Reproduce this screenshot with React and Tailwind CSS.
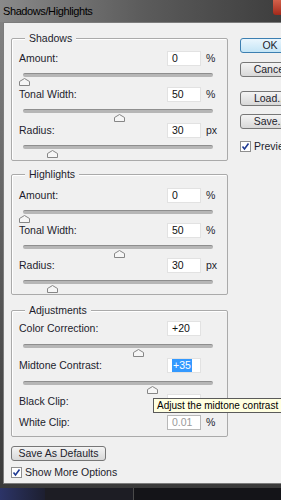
import React from "react";

const font = "font-['Liberation_Sans',Arial,sans-serif]";

function Thumb({ x }) {
    return (
        <svg
            className="absolute top-[5px]"
            style={{ left: x - 5 }}
            width="11"
            height="8"
            viewBox="0 0 11 8"
        >
            <path d="M0.5 7.5 V3.5 L5.5 0.5 L10.5 3.5 V7.5 Z" fill="#f6f6f6" stroke="#868686" />
        </svg>
    );
}

function Slider({ x, h = "h-[21px]", top = "top-[7px]" }) {
    return (
        <div className={`relative ml-[11px] w-[190px] ${h}`}>
            <div className={`absolute left-0 right-0 ${top} h-[4px] rounded-full bg-[#b6b6b6] border-t border-[#8e8e8e]`} />
            <div className={`absolute left-0 right-0 ${top} h-[4px]`}>
                <Thumb x={x} />
            </div>
        </div>
    );
}

function Field({ label, value, unit, selected, disabled }) {
    return (
        <div className="flex items-center h-[15px] pl-[7px]">
            <span className="flex-1 text-[10.5px] text-[#1d1d2d] leading-none">{label}</span>
            <div
                className={`w-[34px] h-[15px] bg-white border ${disabled ? "border-[#b8b8b8] text-[#9a9a9a]" : "border-[#e2e2e2] text-[#111]"} text-[10.5px] leading-none flex items-center pl-[4px]`}
            >
                {selected ? (
                    <span className="bg-[#3399ff] text-white px-[1px] py-[1px]">{value}</span>
                ) : (
                    value
                )}
            </div>
            <span className="w-[26px] pl-[5px] text-[10.5px] text-[#1d1d2d] leading-none">{unit}</span>
        </div>
    );
}

function Group({ title, className, children }) {
    return (
        <div className={`relative w-[217px] border border-[#aaaaaa] rounded-[2px] shadow-[inset_1px_1px_0_#ffffff] ${className}`}>
            <span className="absolute -top-[7px] left-[13px] px-[4px] bg-[#f0f0f0] text-[10.5px] leading-[12px] text-[#1d1d2d]">
                {title}
            </span>
            {children}
        </div>
    );
}

function Button({ children, primary, className }) {
    return (
        <div
            className={`h-[15px] rounded-[3px] border flex items-center justify-center text-[10.5px] leading-none text-[#1d1d2d] ${primary
                ? "border-[#3c7fb1] bg-gradient-to-b from-[#eaf6fd] to-[#c4e5f6]"
                : "border-[#777777] bg-gradient-to-b from-[#f4f4f4] to-[#d8d8d8]"
                } ${className}`}
        >
            {children}
        </div>
    );
}

function Checkbox({ label, className }) {
    return (
        <div className={`flex items-center gap-[3px] ${className}`}>
            <div className="w-[11px] h-[11px] bg-white border border-[#8f8f8f] flex items-center justify-center">
                <svg width="9" height="9" viewBox="0 0 9 9">
                    <path d="M1.5 4.5 L3.5 7 L7.5 1.5" fill="none" stroke="#1f3a93" strokeWidth="1.6" />
                </svg>
            </div>
            <span className="text-[10.5px] leading-none text-[#1d1d2d] whitespace-nowrap">{label}</span>
        </div>
    );
}

export default function App() {
    return (
        <div className={`w-[281px] h-[500px] overflow-hidden bg-[#17171d] ${font}`}>
            <div className="h-[488px] flex flex-col bg-gradient-to-b from-[#858585] via-[#5e5e5e] to-[#3a3a3a]">
                {/* Title bar */}
                <div className="h-[22px] shrink-0 flex items-center justify-between bg-gradient-to-r from-[#8a8a8a] via-[#5c5c5c] to-[#3e3e3e]">
                    <span className="pl-[3px] text-[11px] tracking-[-0.4px] text-black leading-none">Shadows/Highlights</span>
                    <div className="self-start w-[8px] h-[15px] rounded-bl-[3px] bg-gradient-to-b from-[#d2604a] to-[#a3281a]" />
                </div>

                {/* Body */}
                <div className="relative flex-1 ml-[3px] mb-[4px] bg-[#f0f0f0] border-l border-t border-b border-[#7c7c7c] flex overflow-hidden">
                    <div className="ml-[7px] w-[217px] shrink-0 flex flex-col">
                        <Group title="Shadows" className="mt-[15px] pt-[12px] pb-[1px]">
                            <Field label="Amount:" value="0" unit="%" />
                            <Slider x={1} />
                            <Field label="Tonal Width:" value="50" unit="%" />
                            <Slider x={96} />
                            <Field label="Radius:" value="30" unit="px" />
                            <Slider x={29} />
                        </Group>

                        <Group title="Highlights" className="mt-[13px] pt-[13px] pb-[1px]">
                            <Field label="Amount:" value="0" unit="%" />
                            <Slider x={1} h="h-[20px]" />
                            <Field label="Tonal Width:" value="50" unit="%" />
                            <Slider x={96} h="h-[20px]" />
                            <Field label="Radius:" value="30" unit="px" />
                            <Slider x={29} h="h-[20px]" />
                        </Group>

                        <Group title="Adjustments" className="mt-[15px] pt-[10px] pb-[6px]">
                            <Field label="Color Correction:" value="+20" />
                            <Slider x={115} h="h-[22px]" top="top-[8px]" />
                            <Field label="Midtone Contrast:" value="+35" selected />
                            <Slider x={129} h="h-[21px]" top="top-[8px]" />
                            {/* value hidden under the tooltip */}
                            <Field label="Black Clip:" value="" />
                            <div className="h-[6px]" />
                            <Field label="White Clip:" value="0.01" unit="%" disabled />
                        </Group>

                        <Button className="mt-[9px] w-[95px]">Save As Defaults</Button>
                        <Checkbox label="Show More Options" className="mt-[6px]" />
                    </div>

                    <div className="ml-[12px] w-[60px] shrink-0 flex flex-col">
                        <Button primary className="mt-[15px]">OK</Button>
                        <Button className="mt-[9px]">Cancel</Button>
                        <Button className="mt-[14px]">Load...</Button>
                        <Button className="mt-[8px]">Save...</Button>
                        <Checkbox label="Preview" className="mt-[12px]" />
                    </div>

                    {/* Tooltip */}
                    <div className="absolute left-[149px] top-[375px] h-[15px] pl-[3px] pr-[6px] bg-[#ffffe1] border border-[#5a5a5a] flex items-center text-[10px] leading-none text-black whitespace-nowrap">
                        Adjust the midtone contrast
                    </div>
                </div>
            </div>

            {/* Desktop strip */}
            <div className="h-[12px] flex">
                <div className="w-[45px] bg-gradient-to-r from-[#2c3468] to-[#1d1f30]" />
                <div className="w-[88px] bg-[#1d1d24]" />
                <div className="w-[1px] bg-[#4a4a4a]" />
                <div className="flex-1 bg-[#141418]" />
            </div>
        </div>
    );
}
